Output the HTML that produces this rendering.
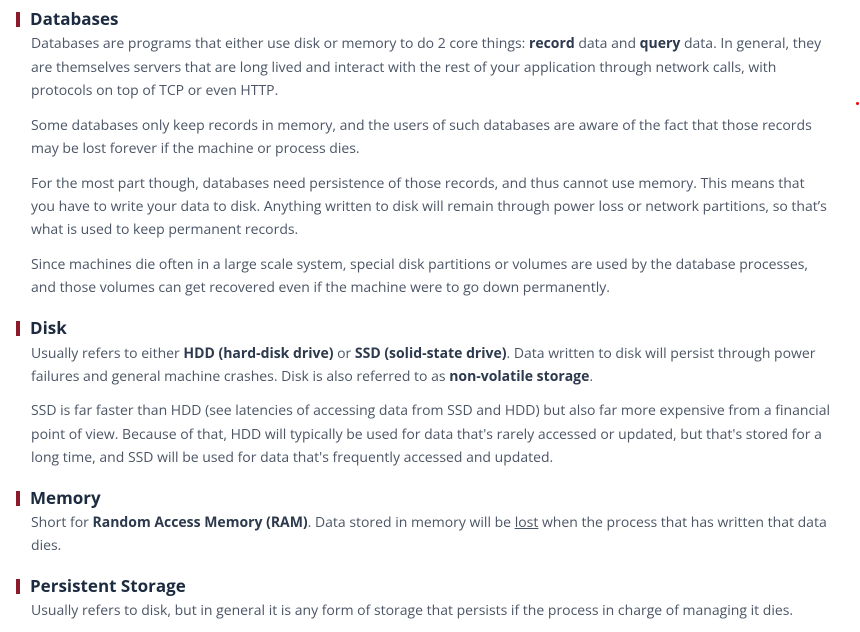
<!DOCTYPE html>
<html><head><meta charset="utf-8"><style>
body{margin:0;width:860px;height:632px;background:#fff;position:relative;overflow:hidden;font-family:"Open Sans","Liberation Sans",sans-serif;}
.l{position:absolute;left:31px;font-size:14px;line-height:23px;color:#4b5565;white-space:nowrap;letter-spacing:0}
.l b{color:#2d3a4d}
.h{position:absolute;left:30px;font-size:17px;font-weight:bold;color:#1d2b40;line-height:22px;white-space:nowrap}
.bar{position:absolute;left:16px;width:4px;height:15px;background:#8b1a2b}
</style></head><body>
<div class="bar" style="top:12px"></div><div class="h" style="top:8px">Databases</div>
<div class="l" style="top:32px">Databases are programs that either use disk or memory to do 2 core things: <b>record</b> data and <b>query</b> data. In general, they</div>
<div class="l" style="top:56px">are themselves servers that are long lived and interact with the rest of your application through network calls, with</div>
<div class="l" style="top:79px">protocols on top of TCP or even HTTP.</div>
<div class="l" style="top:114px">Some databases only keep records in memory, and the users of such databases are aware of the fact that those records</div>
<div class="l" style="top:137px">may be lost forever if the machine or process dies.</div>
<div class="l" style="top:172px">For the most part though, databases need persistence of those records, and thus cannot use memory. This means that</div>
<div class="l" style="top:195px">you have to write your data to disk. Anything written to disk will remain through power loss or network partitions, so that’s</div>
<div class="l" style="top:218px">what is used to keep permanent records.</div>
<div class="l" style="top:253px">Since machines die often in a large scale system, special disk partitions or volumes are used by the database processes,</div>
<div class="l" style="top:276px">and those volumes can get recovered even if the machine were to go down permanently.</div>
<div style="position:absolute;left:856px;top:102px;width:3px;height:3px;border-radius:50%;background:#e00"></div>

<div class="bar" style="top:321px"></div><div class="h" style="top:317px">Disk</div>
<div class="l" style="top:342px">Usually refers to either <b>HDD (hard-disk drive)</b> or <b>SSD (solid-state drive)</b>. Data written to disk will persist through power</div>
<div class="l" style="top:365px">failures and general machine crashes. Disk is also referred to as <b>non-volatile storage</b>.</div>
<div class="l" style="top:399px">SSD is far faster than HDD (see latencies of accessing data from SSD and HDD) but also far more expensive from a financial</div>
<div class="l" style="top:423px">point of view. Because of that, HDD will typically be used for data that's rarely accessed or updated, but that's stored for a</div>
<div class="l" style="top:446px">long time, and SSD will be used for data that's frequently accessed and updated.</div>

<div class="bar" style="top:491px"></div><div class="h" style="top:487px">Memory</div>
<div class="l" style="top:511px">Short for <b>Random Access Memory (RAM)</b>. Data stored in memory will be <u>lost</u> when the process that has written that data</div>
<div class="l" style="top:534px">dies.</div>

<div class="bar" style="top:579px"></div><div class="h" style="top:575px">Persistent Storage</div>
<div class="l" style="top:599px">Usually refers to disk, but in general it is any form of storage that persists if the process in charge of managing it dies.</div>
</body></html>
